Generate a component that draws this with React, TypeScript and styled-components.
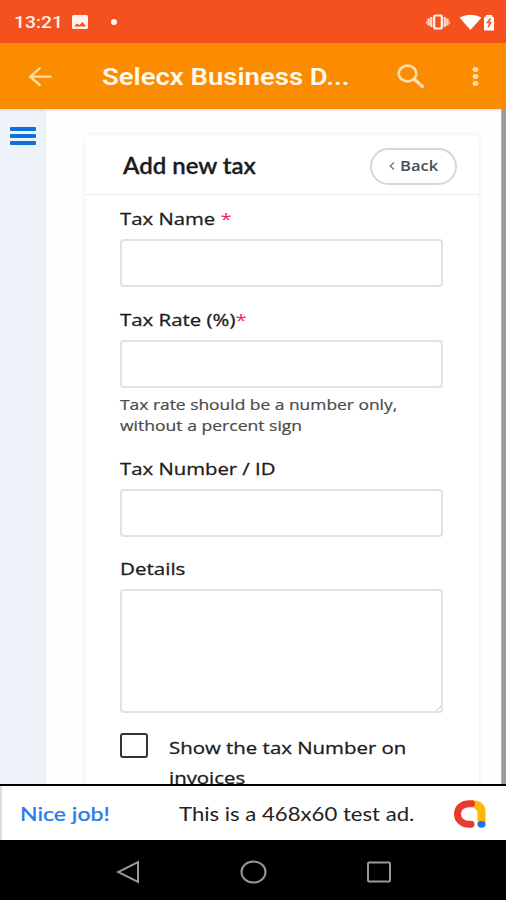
import React from "react";
import styled, { createGlobalStyle } from "styled-components";

const GlobalStyle = createGlobalStyle`
  * { box-sizing: border-box; }
  body { margin: 0; background: #fff; }
`;

const openSans = `"Open Sans", "Noto Sans", sans-serif`;

const Screen = styled.div`
  width: 506px;
  height: 900px;
  overflow: hidden;
  display: flex;
  flex-direction: column;
  font-family: ${openSans};
  color: #1c1c1c;
`;

/* One line of text, widened horizontally from its left edge. */
const Line = styled.span<{ $stretch: number }>`
  display: block;
  width: max-content;
  white-space: nowrap;
  transform: scaleX(${(p) => p.$stretch});
  transform-origin: 0 50%;
`;

const StatusBar = styled.header`
  flex: none;
  height: 43px;
  display: flex;
  align-items: center;
  padding: 1px 11px 0 14px;
  background: #f4511e;
  color: #fff3ee;
`;

const Clock = styled.div`
  width: 57px;
  padding-top: 1px;
  font: 500 16.5px/20px Roboto, sans-serif;
`;

const NotificationDot = styled.i`
  width: 6px;
  height: 6px;
  margin-left: 22px;
  border-radius: 50%;
  background: #fff3ee;
`;

const StatusIcons = styled.div`
  margin-left: auto;
  display: flex;
  align-items: center;
`;

const AppBar = styled.nav`
  flex: none;
  height: 66px;
  display: flex;
  align-items: center;
  padding: 0 27px 0 28px;
  background: #fb8c00;
`;

const AppTitle = styled.h1`
  flex: 1;
  margin: 0 0 0 50px;
  padding-top: 4px;
  font: 600 23px/28px Roboto, sans-serif;
  color: #fff8ec;
`;

const SearchIcon = styled.svg`
  display: block;
  margin-right: 47px;
`;

const Page = styled.main`
  height: 675px;
  flex: none;
  overflow: hidden;
  display: flex;
  background: #fefefe;
  box-shadow: inset 0 4px 3px -3px #d5d5d5;
`;

const SideRail = styled.aside`
  flex: none;
  width: 46px;
  padding: 18px 0 0 10px;
  background: #eef3fa;
  box-shadow: inset 0 4px 3px -3px #d5d5d5;
`;

const MenuButton = styled.button`
  width: 26px;
  padding: 0;
  border: 0;
  background: none;
  display: flex;
  flex-direction: column;
  gap: 3px;
`;

const MenuBar = styled.span`
  width: 26px;
  height: 4px;
  border-radius: 1px;
  background: #0d72d8;
`;

const Content = styled.section`
  flex: 1;
  padding: 26px 22px 0 39px;
`;

const ScrollTrack = styled.div`
  flex: none;
  width: 5px;
  background: #999;
  border-left: 1px solid #b5b5b5;
`;

const Card = styled.article`
  height: 700px;
  border-radius: 4px;
  background: #fff;
  box-shadow: 0 0 4px 1px #f2f2f2;
`;

const CardHeader = styled.div`
  height: 60px;
  display: flex;
  align-items: center;
  justify-content: space-between;
  padding: 4px 22px 0 38px;
  border-bottom: 1px solid #ededed;
`;

const CardTitle = styled.h2`
  margin: 0;
  padding-bottom: 2px;
  font: 600 22px/28px Lato, sans-serif;
  -webkit-text-stroke: 0.3px;
  color: #1c1c1c;
`;

const BackButton = styled.button`
  width: 87px;
  height: 37px;
  display: flex;
  align-items: center;
  padding: 0 0 1px 17px;
  gap: 5px;
  border: 2px solid #d6d7d8;
  border-radius: 19px;
  background: #fff;
  font: 600 14px/20px ${openSans};
  color: #41505a;
`;

const Form = styled.form`
  padding: 13px 36px 0 35px;
`;

const Field = styled.div<{ $gap: number }>`
  margin-bottom: ${(p) => p.$gap}px;
`;

const Label = styled.label`
  display: block;
  height: 31px;
  font-size: 17px;
  -webkit-text-stroke: 0.3px;
  line-height: 22px;
`;

const Required = styled.span`
  color: #f5244f;
  -webkit-text-stroke: 0;
`;

const Input = styled.input`
  display: block;
  width: 100%;
  height: 48px;
  border: 2px solid #e2e2e2;
  border-radius: 4px;
  background: #fff;
  outline: 0;
`;

const TextArea = styled.textarea`
  display: block;
  width: 100%;
  height: 124px;
  border: 2px solid #e2e2e2;
  border-radius: 4px;
  background: #fff;
  resize: none;
`;

const TextAreaBox = styled.div`
  position: relative;
`;

const Grip = styled.svg`
  position: absolute;
  right: 2px;
  bottom: 2px;
`;

const HelpText = styled.div`
  padding-top: 6px;
  font-size: 14.5px;
  line-height: 21.25px;
  -webkit-text-stroke: 0.2px;
  color: #4a4a4a;
`;

const CheckRow = styled.label`
  display: flex;
  gap: 21px;
  font-size: 17px;
  -webkit-text-stroke: 0.3px;
  line-height: 30px;
`;

const CheckBox = styled.span`
  width: 28px;
  height: 25px;
  border: 2px solid #333;
  border-radius: 3px;
`;

const AdBanner = styled.footer`
  flex: none;
  height: 56px;
  display: flex;
  align-items: center;
  padding: 1px 19px 0 20px;
  border-top: 2px solid #000;
  background: #fff;
  box-shadow: inset 2px 0 #dedede;
`;

const AdLink = styled.div`
  width: 159px;
  font: 500 19px/24px Lato, sans-serif;
  -webkit-text-stroke: 0.2px;
  color: #2b7bf0;
`;

const AdText = styled.div`
  flex: 1;
  font: 400 19px/24px Lato, sans-serif;
  color: #222;
`;

const SystemNav = styled.nav`
  flex: none;
  height: 60px;
  display: flex;
  align-items: center;
  gap: 100px;
  padding: 4px 0 0 116px;
  background: #000;
`;

export default function App() {
  return (
    <Screen>
      <GlobalStyle />
      <StatusBar>
        <Clock><Line $stretch={1.17}>13:21</Line></Clock>
        <svg width="18" height="16" viewBox="0 0 18 16">
          <rect x="1" y="1" width="16" height="14" rx="1.5" fill="#fff3ee" />
          <path d="M3 12.5 6 9.500l2.300 1.500L11.500 8l3.700 4.500Z" fill="#f4511e" />
        </svg>
        <NotificationDot />
        <StatusIcons>
          <svg width="29" height="16" viewBox="0 0 29 16">
            <rect x="8.200" y="1.500" width="7.600" height="13" rx="1" fill="none" stroke="#fff3ee" strokeWidth="2.200" />
            <path d="M5.200 3v10M18.800 3v10M2.600 4.500v7M21.400 4.500v7" stroke="#fcd6c8" strokeWidth="2.400" />
            <path d="M.7 7v3M23.300 7v3" stroke="#fbb79f" strokeWidth="1.500" />
          </svg>
          <svg width="40" height="18" viewBox="0 0 40 18">
            <path d="M4.500 4.500Q15.500-1 26.500 4.500L15.500 17Z" fill="#fff" />
            <path d="M29 5Q29 3.500 31 3.500V2h6v1.500Q39 3.500 39 5V17.500H29Z" fill="#fff" />
            <path d="M35.500 5.500 32.500 9.500h3.200L33 14" fill="none" stroke="#f4511e" strokeWidth="1.500" />
          </svg>
        </StatusIcons>
      </StatusBar>

      <AppBar>
        <svg width="24" height="22" viewBox="0 0 24 22" fill="none" stroke="#ffdcae" strokeWidth="2.300">
          <path d="M23.500 11.700H2M12.500 2.700 2.200 11.700l10.300 9" />
        </svg>
        <AppTitle><Line $stretch={1.195}>Selecx Business D...</Line></AppTitle>
        <SearchIcon width="28" height="25" viewBox="0 0 28 25" fill="none" stroke="#ffdcae">
          <ellipse cx="10.500" cy="9.500" rx="8.800" ry="7.800" strokeWidth="2.700" />
          <path d="m16.500 14.500 10 9" strokeWidth="3.400" />
        </SearchIcon>
        <svg width="7" height="20" viewBox="0 0 7 20" fill="#ffdcae">
          <ellipse cx="3.500" cy="3.500" rx="2.900" ry="2.400" />
          <ellipse cx="3.500" cy="10.500" rx="2.900" ry="2.400" />
          <ellipse cx="3.500" cy="17.500" rx="2.900" ry="2.400" />
        </svg>
      </AppBar>

      <Page>
        <SideRail>
          <MenuButton aria-label="Menu">
            <MenuBar />
            <MenuBar />
            <MenuBar />
          </MenuButton>
        </SideRail>
        <Content>
          <Card>
            <CardHeader>
              <CardTitle><Line $stretch={1.09}>Add new tax</Line></CardTitle>
              <BackButton>
                <svg width="6" height="10" viewBox="0 0 6 10" fill="none" stroke="#69757d" strokeWidth="1.300">
                  <path d="M5 1.500 1.200 5 5 8.500" />
                </svg>
                <Line $stretch={1.18}>Back</Line>
              </BackButton>
            </CardHeader>
            <Form>
              <Field $gap={22}>
                <Label><Line $stretch={1.195}>Tax Name <Required>*</Required></Line></Label>
                <Input />
              </Field>
              <Field $gap={21}>
                <Label><Line $stretch={1.2}>Tax Rate (%)<Required>*</Required></Line></Label>
                <Input />
                <HelpText>
                  <Line $stretch={1.2}>Tax rate should be a number only,</Line>
                  <Line $stretch={1.21}>without a percent sign</Line>
                </HelpText>
              </Field>
              <Field $gap={21}>
                <Label><Line $stretch={1.195}>Tax Number / ID</Line></Label>
                <Input />
              </Field>
              <Field $gap={20}>
                <Label><Line $stretch={1.21}>Details</Line></Label>
                <TextAreaBox>
                  <TextArea />
                  <Grip width="5" height="5" viewBox="0 0 6 6" stroke="#bbb">
                    <path d="M0 6 6 0" />
                  </Grip>
                </TextAreaBox>
              </Field>
              <CheckRow>
                <CheckBox />
                <div>
                  <Line $stretch={1.2}>Show the tax Number on</Line>
                  <Line $stretch={1.2}>invoices</Line>
                </div>
              </CheckRow>
            </Form>
          </Card>
        </Content>
        <ScrollTrack />
      </Page>

      <AdBanner>
        <AdLink><Line $stretch={1.21}>Nice job!</Line></AdLink>
        <AdText><Line $stretch={1.165}>This is a 468x60 test ad.</Line></AdText>
        <svg width="34" height="28" viewBox="0 0 34 28" fill="none">
          <path d="M19 .3C28 .3 32.500 5 32.500 11.500V24h-8V13Q24.500 9 19 7Z" fill="#fbb70a" />
          <path d="M18.500 3.800C9 3 4.500 8 4.500 14S9.500 25 18 24.300" stroke="#e63b2e" strokeWidth="7" strokeLinecap="round" />
          <ellipse cx="28.500" cy="24.300" rx="4" ry="3.400" fill="#1a73e8" />
        </svg>
      </AdBanner>

      <SystemNav>
        <svg width="24" height="24" viewBox="0 0 24 24" fill="none" stroke="#999" strokeWidth="2">
          <path d="M22 2v20L2 12Z" />
        </svg>
        <svg width="27" height="24" viewBox="0 0 27 24" fill="none" stroke="#999" strokeWidth="2">
          <ellipse cx="13.500" cy="12" rx="12" ry="10.500" />
        </svg>
        <svg width="24" height="22" viewBox="0 0 24 22" fill="none" stroke="#999" strokeWidth="2">
          <rect x="1" y="1.500" width="22" height="19" rx="1" />
        </svg>
      </SystemNav>
    </Screen>
  );
}
